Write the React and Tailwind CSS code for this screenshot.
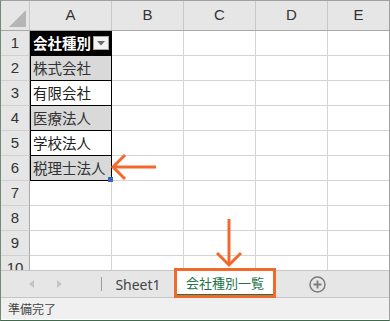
import React from 'react';

const cols = ['A', 'B', 'C', 'D', 'E'];

const rows = [
  { n: 1, text: '会社種別', kind: 'head' },
  { n: 2, text: '株式会社', kind: 'gray' },
  { n: 3, text: '有限会社', kind: 'white' },
  { n: 4, text: '医療法人', kind: 'gray' },
  { n: 5, text: '学校法人', kind: 'white' },
  { n: 6, text: '税理士法人', kind: 'gray', handle: true },
  { n: 7 },
  { n: 8 },
  { n: 9 },
  { n: 10 },
];

const jp = { fontFamily: '"Noto Sans CJK JP", "Noto Sans", sans-serif' };

const FilterButton = () => (
  <span className="ml-auto mr-[2px] flex h-[14px] w-[16px] items-center justify-center border border-[#a6a6a6] bg-[#f3f3f3]">
    <svg width="8" height="5" viewBox="0 0 8 5">
      <path d="M0 0h8L4 4.5z" fill="#6b6b6b" />
    </svg>
  </span>
);

const CellA = ({ row }) => {
  if (!row.text) {
    return <div className="h-[25px] border-r border-b border-[#d4d4d4]" />;
  }
  const bg =
    row.kind === 'head'
      ? 'bg-black text-white font-bold'
      : row.kind === 'gray'
      ? 'bg-[#d9d9d9] text-[#333]'
      : 'bg-white text-[#222]';
  return (
    <div
      className={`relative flex h-[25px] items-center border-r border-b border-black pl-[3px] text-[14.5px] leading-none shadow-[inset_1px_0_0_#000] ${bg}`}
    >
      <span className="whitespace-nowrap">{row.text}</span>
      {row.kind === 'head' && <FilterButton />}
      {row.handle && (
        <span className="absolute -right-[2px] -bottom-[2px] h-[5px] w-[5px] bg-[#3a62c0]" />
      )}
    </div>
  );
};

const Grid = () => (
  <div className="relative" style={jp}>
    {/* column header */}
    <div className="grid h-[30px] grid-cols-[29px_82px_72px_72px_72px_1fr] border-b border-[#a9a9a9] bg-[#e6e6e6]">
      <div className="relative border-r border-[#c8c8c8]">
        <svg className="absolute left-[8px] top-[9px]" width="17" height="17" viewBox="0 0 17 17">
          <path d="M17 0V17H0z" fill="#b5b5b5" />
        </svg>
      </div>
      {cols.map((c) => (
        <div
          key={c}
          className="flex items-center justify-center border-r border-[#c8c8c8] text-[15px] text-[#333] last:border-r-0"
          style={{ fontFamily: '"Liberation Sans", sans-serif' }}
        >
          {c}
        </div>
      ))}
    </div>

    {/* body */}
    <div className="h-[239px] overflow-hidden">
      <div className="grid grid-cols-[29px_82px_72px_72px_72px_1fr]">
        {rows.map((r) => (
          <React.Fragment key={r.n}>
            <div
              className="flex h-[25px] items-center justify-center border-r border-b border-r-[#a9a9a9] border-b-[#d0d0d0] bg-[#e6e6e6] text-[15px] text-[#333]"
              style={{ fontFamily: '"Liberation Sans", sans-serif' }}
            >
              {r.n}
            </div>
            <CellA row={r} />
            <div className="h-[25px] border-r border-b border-[#d4d4d4]" />
            <div className="h-[25px] border-r border-b border-[#d4d4d4]" />
            <div className="h-[25px] border-r border-b border-[#d4d4d4]" />
            <div className="h-[25px] border-b border-[#d4d4d4]" />
          </React.Fragment>
        ))}
      </div>
    </div>

    {/* annotation arrows */}
    <svg className="pointer-events-none absolute left-0 top-0" width="388" height="269">
      <g stroke="#f26a2b" strokeWidth="3" fill="none" strokeLinecap="butt">
        <path d="M113 166H155" />
        <path d="M124 154L112 166L124 178" />
        <path d="M228 218V264" />
        <path d="M216 252L228 264L240 252" />
      </g>
    </svg>
  </div>
);

const TabBar = () => (
  <div className="flex h-[28px] items-stretch border-t border-b border-[#c6c6c6] bg-[#e6e6e6]" style={jp}>
    <div className="flex w-[100px] items-center">
      <svg className="ml-[28px]" width="5" height="8" viewBox="0 0 5 8">
        <path d="M5 0V8L0 4z" fill="#c4c4c4" />
      </svg>
      <svg className="ml-[23px]" width="5" height="8" viewBox="0 0 5 8">
        <path d="M0 0V8L5 4z" fill="#c4c4c4" />
      </svg>
    </div>
    <div className="my-[6px] w-px bg-[#9c9c9c]" />
    <div
      className="flex w-[72px] items-center justify-center text-[14px] text-[#444]"
      style={{ fontFamily: '"Noto Sans", sans-serif' }}
    >
      Sheet1
    </div>
    <div className="relative flex w-[102px] items-center justify-center bg-white text-[13px] text-[#217346]">
      <span className="border-b-2 border-[#217346] px-[9px] pb-[1px] leading-[20px]">会社種別一覧</span>
      <span className="absolute -top-[3px] -bottom-[1px] left-0 right-0 border-[3px] border-[#f26a2b]" />
    </div>
    <div className="flex w-[82px] items-center justify-center">
      <svg width="17" height="17" viewBox="0 0 17 17">
        <circle cx="8.5" cy="8.5" r="7.5" fill="none" stroke="#7b7b7b" strokeWidth="1.5" />
        <path d="M8.5 4.5V12.5M4.5 8.5H12.5" stroke="#7b7b7b" strokeWidth="1.8" />
      </svg>
    </div>
  </div>
);

const StatusBar = () => (
  <div className="flex h-[21px] items-center bg-[#f0f0f0] pl-[7px] text-[12px] text-[#444]" style={jp}>
    準備完了
  </div>
);

export default function App() {
  return (
    <div className="h-[321px] w-[390px] overflow-hidden border border-t-[#a0a0a0] border-r-[#a0a0a0] border-b-[#3d6b4c] border-l-[#6f8a76] bg-white">
      <Grid />
      <TabBar />
      <StatusBar />
    </div>
  );
}
